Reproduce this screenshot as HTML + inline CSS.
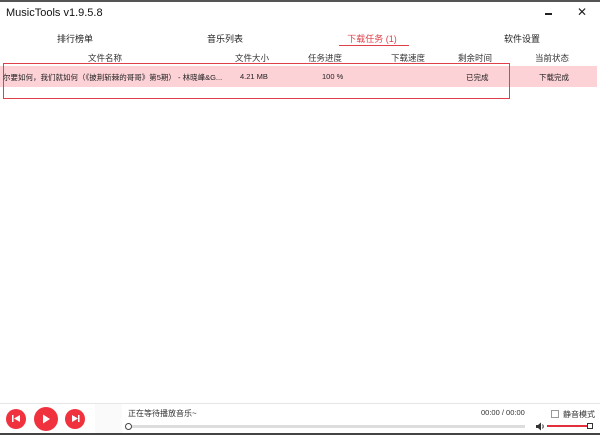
<!DOCTYPE html>
<html><head><meta charset="utf-8"><style>
*{margin:0;padding:0;box-sizing:border-box}
body{width:600px;height:435px;background:#fff;position:relative;overflow:hidden;font-family:"Liberation Sans","Noto Sans CJK SC",sans-serif;color:#222}
.a{position:absolute;white-space:nowrap}
.t{font-size:9px;transform:translateX(-50%)}
.h{font-size:8.5px;transform:translateX(-50%);color:#333}
.c{position:absolute;border-radius:50%;background:#f0323f}
</style></head><body>
<div class="a" style="left:0;top:0;width:600px;height:2px;background:#555"></div>
<div class="a" style="left:0;top:433px;width:600px;height:2px;background:#444"></div>
<div class="a" style="left:6px;top:7px;font-size:11px;color:#111">MusicTools v1.9.5.8</div>
<div class="a" style="left:545px;top:13px;width:7px;height:2px;background:#222"></div>
<div class="a" style="left:577px;top:5px;font-size:12px;color:#222">✕</div>
<div class="a t" style="left:75px;top:32px">排行榜单</div>
<div class="a t" style="left:225px;top:32px">音乐列表</div>
<div class="a t" style="left:372px;top:32px;color:#e0404a">下载任务 (1)</div>
<div class="a" style="left:339px;top:45px;width:70px;height:1px;background:#e0404a"></div>
<div class="a t" style="left:522px;top:32px">软件设置</div>
<div class="a h" style="left:105px;top:52px">文件名称</div>
<div class="a h" style="left:252px;top:52px">文件大小</div>
<div class="a h" style="left:325px;top:52px">任务进度</div>
<div class="a h" style="left:408px;top:52px">下载速度</div>
<div class="a h" style="left:475px;top:52px">剩余时间</div>
<div class="a h" style="left:552px;top:52px">当前状态</div>
<div class="a" style="left:0;top:66px;width:597px;height:21px;background:#fcd2d6"></div>
<div class="a" style="left:3px;top:63px;width:507px;height:36px;border:1.5px solid #e0404a"></div>
<div class="a" style="left:3px;top:72px;font-size:7.5px;color:#222">尔要如何，我们就如何（《披荆斩棘的哥哥》第5期） - 林晓峰&amp;G...</div>
<div class="a" style="left:240px;top:72px;font-size:7.5px">4.21 MB</div>
<div class="a" style="left:322px;top:72px;font-size:7.5px">100 %</div>
<div class="a" style="left:466px;top:72px;font-size:7.5px">已完成</div>
<div class="a" style="left:539px;top:72px;font-size:7.5px">下载完成</div>
<div class="a" style="left:0;top:403px;width:600px;height:1px;background:#e6e6e6"></div>
<div class="a" style="left:95px;top:404px;width:27px;height:29px;background:#fafafa"></div>
<div class="c" style="left:6px;top:409px;width:20px;height:20px"></div>
<div class="c" style="left:34px;top:407px;width:24px;height:24px"></div>
<div class="c" style="left:65px;top:409px;width:20px;height:20px"></div>
<svg class="a" style="left:0;top:400px" width="90" height="35"><g fill="#fff"><rect x="12" y="15" width="1.5" height="7"/><path d="M20 15v7l-6-3.5z"/><path d="M43 14.5v9l7-4.5z"/><path d="M72 15v7l6-3.5z"/><rect x="78" y="15" width="1.5" height="7"/></g></svg>
<div class="a" style="left:128px;top:408px;font-size:8px;color:#333">正在等待播放音乐~</div>
<div class="a" style="left:481px;top:408px;font-size:7.5px;color:#333">00:00 / 00:00</div>
<div class="a" style="left:130px;top:425px;width:395px;height:3px;background:#ddd"></div>
<div class="a" style="left:125px;top:423px;width:7px;height:7px;border-radius:50%;border:1px solid #444;background:#fff"></div>
<div class="a" style="left:551px;top:410px;width:8px;height:8px;border:1px solid #999"></div>
<div class="a" style="left:563px;top:409px;font-size:8px;color:#333">静音模式</div>
<svg class="a" style="left:535px;top:422px" width="10" height="9"><path d="M1 3h2l3-2.5v8L3 6H1z" fill="#333"/><path d="M7.5 2.5q1.5 2 0 4" stroke="#333" fill="none"/></svg>
<div class="a" style="left:547px;top:425px;width:42px;height:2px;background:#e0303c"></div>
<div class="a" style="left:587px;top:423px;width:6px;height:6px;border:1px solid #333;background:#fff"></div>
</body></html>
